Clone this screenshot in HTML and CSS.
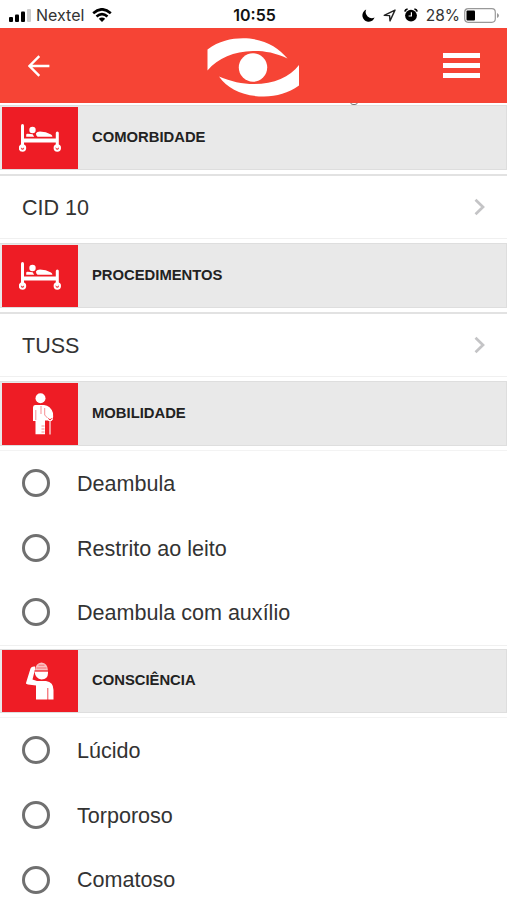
FILE: index.html
```html
<!DOCTYPE html>
<html lang="pt-BR">
<head>
    <meta charset="UTF-8">
    <meta name="viewport" content="width=device-width, initial-scale=1.0">
    <title>Paciente</title>
    <link rel="stylesheet" href="styles.css">
</head>
<body>
    <!-- Shared icons -->
    <svg class="icon-defs" width="0" height="0">
        <symbol id="icon-bed" viewBox="0 0 42 28">
            <g fill="none" stroke="#fff">
                <path d="M3.5 1.5V23" stroke-width="3" stroke-linecap="round"/>
                <path d="M38.3 9V23" stroke-width="3" stroke-linecap="round"/>
                <path d="M4 16.5H38" stroke-width="4"/>
                <circle cx="3.5" cy="24" r="2.7" stroke-width="2"/>
                <circle cx="38.3" cy="24" r="2.7" stroke-width="2"/>
            </g>
            <circle cx="13.5" cy="6" r="3.2" fill="#fff"/>
            <path d="M7.2 12.7V11q0-1.3 1.4-1.2l5 .5 1.6 2.4zM17 9.2q1-1.8 4-1.8 6 0 11 3.2 1.4.9 1.4 2.1H18.5q-1.8-1.4-1.5-3.5z" fill="#fff"/>
        </symbol>
    </svg>

    <div class="status-bar">
        <div class="status-left">
            <svg class="signal" width="22" height="13" viewBox="0 0 22 13">
                <rect x="0" y="8" width="4" height="5" rx="1"/>
                <rect x="6" y="5.5" width="4" height="7.5" rx="1"/>
                <rect x="12" y="2.5" width="4" height="10.5" rx="1"/>
                <rect x="18" y="0" width="4" height="13" rx="1" fill="#ccc"/>
            </svg>
            <span class="carrier">Nextel</span>
            <svg class="wifi" width="20" height="14" viewBox="0 0 20 14">
                <g fill="none" stroke="#000" stroke-width="2.6">
                    <path d="M1.2 5.2Q10-2.6 18.8 5.2"/>
                    <path d="M4.5 8.6Q10 3.8 15.5 8.6"/>
                </g>
                <path d="M6.8 10.8Q10 8 13.2 10.8L10 14z"/>
            </svg>
        </div>
        <span class="clock">10:55</span>
        <div class="status-right">
            <svg width="13" height="13" viewBox="0 0 13 13">
                <path d="M4.2.6A6.3 6.3 0 1 0 12.6 8.6 6.2 6.2 0 0 1 4.2.6z"/>
            </svg>
            <svg class="location" width="13" height="13" viewBox="0 0 13 13">
                <path d="M1.2 6.4L12 1.1 7 11.9 6.6 6.6z" fill="none" stroke="#222" stroke-width="1.4" stroke-linejoin="round"/>
            </svg>
            <svg class="alarm" width="14" height="14" viewBox="0 0 14 14">
                <circle cx="7" cy="7.6" r="5.9"/>
                <path d="M.9 3.7Q1.2 1.4 3.6 1M13.1 3.7Q12.8 1.4 10.4 1" fill="none" stroke="#000" stroke-width="1.5"/>
                <path d="M7.4 4.3V8H4.6" fill="none" stroke="#fff" stroke-width="1.2"/>
            </svg>
            <span class="percent">28%</span>
            <svg class="battery" width="36" height="15" viewBox="0 0 36 15">
                <rect x=".7" y=".7" width="30.6" height="13.6" rx="3.5" fill="none" stroke="#999" stroke-width="1.2"/>
                <rect x="2.5" y="2.5" width="8.5" height="10" rx="1"/>
                <path d="M33 5q2 1 2 2.5T33 10z" fill="#999"/>
            </svg>
        </div>
    </div>

    <header class="header">
        <svg class="back" width="22" height="22" viewBox="0 0 22 22">
            <path d="M21.4 11H1.5M11.3 1.2L1.5 11l9.8 9.8" fill="none" stroke="#fff" stroke-width="2.4"/>
        </svg>
        <svg class="logo" width="93" height="59" viewBox="0 0 93 59">
            <g fill="#fff">
                <path d="M.5 11.5C12 3 24 .3 36 .3 56 .3 71 9 80.5 20.5 68 14.5 57 12.8 46 13 27 13.5 11 20 .5 32.5z"/>
                <path d="M12 38.5C24 43.5 35 46 47 46 67 46 83 39 92 27V47.5C81 55 70 58.5 57 58.5 36 58.5 21 51 12 38.5z"/>
                <circle cx="46" cy="29.5" r="14.2"/>
            </g>
        </svg>
        <div class="menu">
            <span></span>
            <span></span>
            <span></span>
        </div>
    </header>

    <main class="content">
        <!-- Bottom edge of the row scrolled under the header -->
        <div class="scrolled-row"><i></i></div>

        <div class="section-title">
            <div class="section-icon"><svg width="42" height="28"><use href="#icon-bed"/></svg></div>
            <h2>COMORBIDADE</h2>
        </div>
        <div class="list link-list">
            <a class="link-item">
                <span>CID 10</span>
                <svg width="11" height="18" viewBox="0 0 11 18"><path d="M1.5 1.8L9 9l-7.5 7.2" fill="none" stroke="#c4c4c6" stroke-width="2.7"/></svg>
            </a>
        </div>

        <div class="section-title">
            <div class="section-icon"><svg width="42" height="28"><use href="#icon-bed"/></svg></div>
            <h2>PROCEDIMENTOS</h2>
        </div>
        <div class="list link-list">
            <a class="link-item">
                <span>TUSS</span>
                <svg width="11" height="18" viewBox="0 0 11 18"><path d="M1.5 1.8L9 9l-7.5 7.2" fill="none" stroke="#c4c4c6" stroke-width="2.7"/></svg>
            </a>
        </div>

        <div class="section-title">
            <div class="section-icon">
                <svg class="icon-crutch" width="22" height="42" viewBox="0 0 22 42">
                    <g fill="#fff">
                        <circle cx="8.5" cy="5.3" r="5"/>
                        <path d="M3 12H12Q18.5 12.5 21 20 21.8 24 20 27.5H13V41.3H3.5V28H1V14.5Q1 12 3 12z"/>
                    </g>
                    <path d="M3.8 17V27M9 13V21M12.7 15V22L15.5 25M9.5 33h3M9.5 36h3M9.5 39h3M13.5 28.5v5" fill="none" stroke="#ee1c25" stroke-width=".5"/>
                    <path d="M18 28V41.5M15.5 25.5Q18 30 20.5 26" fill="none" stroke="#fff" stroke-width="1.1"/>
                    <path d="M16.3 25.5Q18 28 19.7 25.5" fill="none" stroke="#ee1c25" stroke-width="1"/>
                </svg>
            </div>
            <h2>MOBILIDADE</h2>
        </div>
        <div class="list radio-list">
            <label class="radio-item"><input type="radio" name="mobilidade"><span>Deambula</span></label>
            <label class="radio-item"><input type="radio" name="mobilidade"><span>Restrito ao leito</span></label>
            <label class="radio-item"><input type="radio" name="mobilidade"><span>Deambula com auxílio</span></label>
        </div>

        <div class="section-title">
            <div class="section-icon">
                <svg width="28" height="38" viewBox="0 0 28 38">
                    <g fill="#fff">
                        <path d="M8.5 9.5H22V11Q22 17 15.5 17.5 9.5 17 8.5 9.5z"/>
                        <path d="M9 8.5Q9.5 1 15.5 .5 21.5 1 22 8.5z" fill="#fbbfc2"/>
                        <path d="M0 21L4.5 6.5Q5.5 4 9 4.5V7.5L6.5 17.5 11 19H20Q27.5 20 27.5 28V37.5H10V23.5L2 22.5Q-.3 22 0 21z"/>
                    </g>
                    <path d="M8.5 9H22.5M10.5 6h10M12.5 3.2h6" fill="none" stroke="#ee1c25" stroke-width=".5"/>
                    <path d="M21.8 26V38" fill="none" stroke="#ee1c25" stroke-width=".8"/>
                </svg>
            </div>
            <h2>CONSCIÊNCIA</h2>
        </div>
        <div class="list radio-list">
            <label class="radio-item"><input type="radio" name="consciencia"><span>Lúcido</span></label>
            <label class="radio-item"><input type="radio" name="consciencia"><span>Torporoso</span></label>
            <label class="radio-item"><input type="radio" name="consciencia"><span>Comatoso</span></label>
        </div>
    </main>
</body>
</html>
```
FILE: styles.css
```css
* {
    box-sizing: border-box;
}
body {
    margin: 0;
    height: 900px;
    overflow: hidden;
    background-color: #fff;
    color: #333;
    font-family: "Liberation Sans", Arial, sans-serif;
}
svg {
    display: block;
    flex-shrink: 0;
}
.icon-defs {
    position: absolute;
}
.status-bar {
    display: grid;
    grid-template-columns: 1fr auto 1fr;
    align-items: center;
    height: 28px;
    padding: 2px 7px 0 9px;
    font-family: Inter, sans-serif;
    font-size: 16px;
    color: #111;
}
.status-left,
.status-right {
    display: flex;
    align-items: center;
}
.status-right {
    justify-content: flex-end;
}
.carrier {
    margin-left: 5px;
    color: #333;
}
.wifi {
    margin-left: 8px;
}
.clock {
    font-weight: 600;
}
.location {
    margin-left: 8px;
}
.alarm {
    margin-left: 8px;
}
.percent {
    margin: 0 4px 0 8px;
    font-size: 15.5px;
    color: #333;
}
.header {
    display: grid;
    grid-template-columns: 1fr auto 1fr;
    align-items: center;
    height: 75px;
    padding: 0 27px;
    background-color: #f64435;
}
.back {
    margin-left: 1px;
}
.logo {
    margin-top: 4px;
}
.menu {
    display: flex;
    flex-direction: column;
    justify-self: end;
    gap: 5px;
    width: 37px;
}
.menu span {
    height: 5px;
    background-color: #fff;
}
.scrolled-row {
    height: 2.4px;
    padding-left: 350px;
    overflow: hidden;
}
.scrolled-row i {
    display: block;
    width: 8px;
    height: 6px;
    margin-top: -4px;
    border: 1.5px solid #777;
    border-radius: 4px;
}
.section-title {
    display: flex;
    align-items: center;
    height: 64.5px;
    background-color: #e9e9e9;
    border: 1px solid #dedede;
    border-left: none;
}
.section-title h2 {
    margin: 0 0 2px 14px;
    font-size: 14.8px;
    color: #222;
}
.section-icon {
    display: flex;
    align-items: center;
    justify-content: center;
    width: 76px;
    height: 62px;
    margin-left: 2px;
    background-color: #ee1c25;
}
.icon-crutch {
    margin-left: 5px;
}
.list {
    border-top: 1px solid #f3f3f3;
    border-bottom: 1px solid #f0f0f0;
    font-size: 21.55px;
}
.link-list {
    margin: 4px 0;
    border-top: 2px solid #e2e2e2;
}
.link-item {
    display: flex;
    align-items: center;
    justify-content: space-between;
    height: 62.5px;
    padding: 0 22px;
}
.link-item span,
.radio-item span {
    padding-top: 1.5px;
}
.radio-list {
    margin: 4px 0 3px;
}
.radio-item {
    display: flex;
    align-items: center;
    height: 64.6px;
    padding-left: 22px;
}
.radio-item input {
    appearance: none;
    width: 28px;
    height: 28px;
    margin: 0 27px 0 0;
    border: 3px solid #707070;
    border-radius: 50%;
}
```
